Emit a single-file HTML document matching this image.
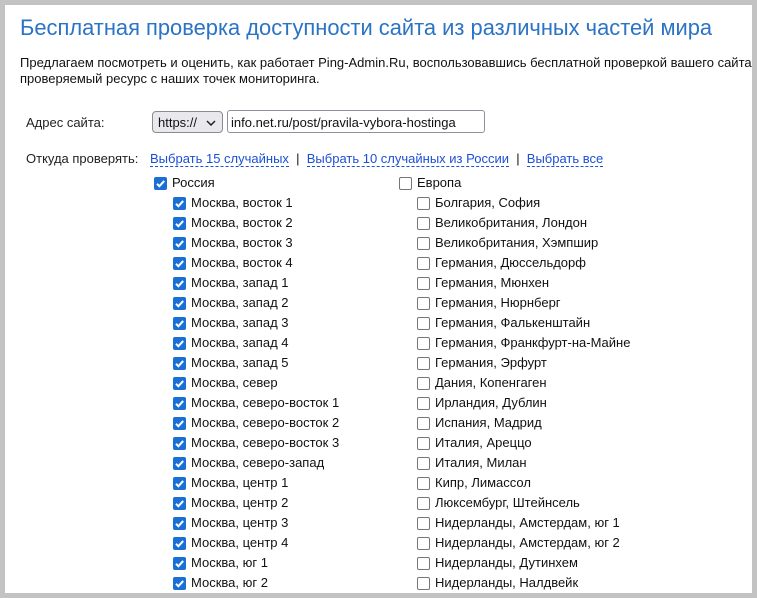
<!DOCTYPE html>
<html><head><meta charset="utf-8"><style>
*{margin:0;padding:0;box-sizing:border-box}
html,body{width:757px;height:598px;overflow:hidden;background:#c3c3c3;font-family:"Liberation Sans",Arial,sans-serif}
.page{position:absolute;left:5px;top:5px;width:747px;height:588px;background:#fff;overflow:hidden}
.abs{position:absolute;white-space:nowrap}
h1{position:absolute;left:15px;top:10px;font-weight:normal;font-size:21.9px;color:#2a73c5;white-space:nowrap}
.p{left:15px;font-size:13px;color:#111}
.lbl{font-size:13px;color:#222}
.sel{position:absolute;left:147px;top:106px;width:71px;height:22px;border:1px solid #8a8a8f;border-radius:4px;background:#e9e9ed;font-size:13px;padding:3px 0 0 5px;color:#111}
.inp{position:absolute;left:222px;top:105px;width:258px;height:23px;border:1px solid #8f8f9d;border-radius:3px;font-size:13px;padding:4px 0 0 3px;color:#111}
a{color:#1a4fd8;text-decoration:none;border-bottom:1px dashed #1a4fd8;font-size:13px}
.row{position:absolute;height:20px;font-size:13px;color:#111;white-space:nowrap}
.cb{position:absolute;top:0;width:13px;height:13px;border-radius:2px}
.on{background:#1a6fd4}
.off{border:1.5px solid #767676;background:#fff}
.t{position:absolute;top:-2px}
</style></head><body><div class="page">
<h1>Бесплатная проверка доступности сайта из различных частей мира</h1>
<div class="abs p" style="top:50px">Предлагаем посмотреть и оценить, как работает Ping-Admin.Ru, воспользовавшись бесплатной проверкой вашего сайта и</div>
<div class="abs p" style="top:66px">проверяемый ресурс с наших точек мониторинга.</div>
<div class="abs lbl" style="left:21px;top:110px">Адрес сайта:</div>
<div class="sel">https://<svg style="position:absolute;right:6px;top:8px" width="10" height="6" viewBox="0 0 10 6"><path d="M1 1L5 5L9 1" stroke="#222" stroke-width="1.5" fill="none"/></svg></div>
<div class="inp">info.net.ru/post/pravila-vybora-hostinga</div>
<div class="abs lbl" style="left:21px;top:146px">Откуда проверять:</div>
<div class="abs" style="left:145px;top:146px;font-size:13px;color:#111"><a>Выбрать 15 случайных</a>&nbsp;&nbsp;|&nbsp;&nbsp;<a>Выбрать 10 случайных из России</a>&nbsp;&nbsp;|&nbsp;&nbsp;<a>Выбрать все</a></div>
<div id="rows"></div>
</div>
<script>
var L=["Москва, восток 1","Москва, восток 2","Москва, восток 3","Москва, восток 4","Москва, запад 1","Москва, запад 2","Москва, запад 3","Москва, запад 4","Москва, запад 5","Москва, север","Москва, северо-восток 1","Москва, северо-восток 2","Москва, северо-восток 3","Москва, северо-запад","Москва, центр 1","Москва, центр 2","Москва, центр 3","Москва, центр 4","Москва, юг 1","Москва, юг 2"];
var R=["Болгария, София","Великобритания, Лондон","Великобритания, Хэмпшир","Германия, Дюссельдорф","Германия, Мюнхен","Германия, Нюрнберг","Германия, Фалькенштайн","Германия, Франкфурт-на-Майне","Германия, Эрфурт","Дания, Копенгаген","Ирландия, Дублин","Испания, Мадрид","Италия, Ареццо","Италия, Милан","Кипр, Лимассол","Люксембург, Штейнсель","Нидерланды, Амстердам, юг 1","Нидерланды, Амстердам, юг 2","Нидерланды, Дутинхем","Нидерланды, Налдвейк"];
var tick='<svg width="13" height="13" viewBox="0 0 13 13"><path d="M3 6.8L5.4 9.2L10.2 3.9" stroke="#fff" stroke-width="2" fill="none"/></svg>';
function row(x,y,on,txt){return '<div class="row" style="left:'+x+'px;top:'+y+'px"><div class="cb '+(on?'on':'off')+'">'+(on?tick:'')+'</div><span class="t" style="left:18px">'+txt+'</span></div>';}
var h=row(149,172,1,"Россия")+row(394,172,0,"Европа");
for(var i=0;i<20;i++){h+=row(168,192+i*20,1,L[i])+row(412,192+i*20,0,R[i]);}
document.getElementById('rows').innerHTML=h;
</script>
</body></html>
